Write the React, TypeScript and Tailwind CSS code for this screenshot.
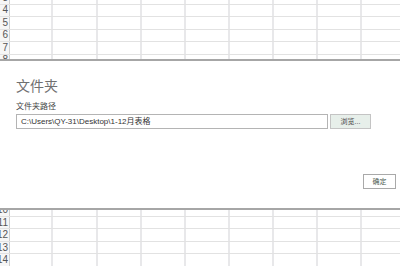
const COLS = [43, 45, 44, 44, 44, 44, 44, 44, 44];

function Sheet({ rows, offset, height }: { rows: number[]; offset: number; height: number }) {
    return (
        <div className="overflow-hidden bg-white" style={{ height }}>
            <div style={{ marginTop: offset }}>
                {rows.map((r) => (
                    <div key={r} className="flex h-[12.5px] border-b border-[#e2e2e2]">
                        <div className="w-[10px] shrink-0 overflow-hidden bg-[#f6f6f6] border-r border-[#cfcfcf] flex justify-end items-center pr-[1px]">
                            <span className="text-[10px] leading-none text-[#555]">{r}</span>
                        </div>
                        {COLS.map((w, i) => (
                            <div key={i} className="shrink-0 border-r-2 border-[#e8e8ea]" style={{ width: w }} />
                        ))}
                    </div>
                ))}
            </div>
        </div>
    );
}

export default function App() {
    return (
        <div
            className="w-[400px] h-[266px] overflow-hidden bg-white flex flex-col"
            style={{ fontFamily: '"Liberation Sans", "Noto Sans CJK SC", sans-serif' }}
        >
            <Sheet rows={[3, 4, 5, 6, 7, 8]} offset={-8} height={60} />

            <div className="h-[151px] shrink-0 border-t-2 border-b-2 border-[#a6a6a6] bg-white flex flex-col pl-[16px] pr-[4px]">
                <div className="pt-[18px] text-[14px] leading-[14px] text-[#707070]">文件夹</div>
                <div className="mt-[10px] text-[8px] leading-[8px] text-[#444]">文件夹路径</div>
                <div className="mt-[3px] flex gap-[2px]">
                    <div className="w-[312px] h-[15px] border border-[#b4b4b4] flex items-center pl-[4px] text-[8px] text-[#333]">
                        C:\Users\QY-31\Desktop\1-12月表格
                    </div>
                    <div className="w-[41px] h-[15px] border border-[#c4c4c4] bg-[#e7efea] flex items-center justify-center text-[7px] text-[#444]">
                        浏览...
                    </div>
                </div>
                <div className="mt-[45px] flex justify-end">
                    <div className="w-[33px] h-[15px] border border-[#a9a9a9] bg-white flex items-center justify-center text-[7px] text-[#4a5a50]">
                        确定
                    </div>
                </div>
            </div>

            <Sheet rows={[10, 11, 12, 13, 14, 15]} offset={-6} height={56} />
        </div>
    );
}
